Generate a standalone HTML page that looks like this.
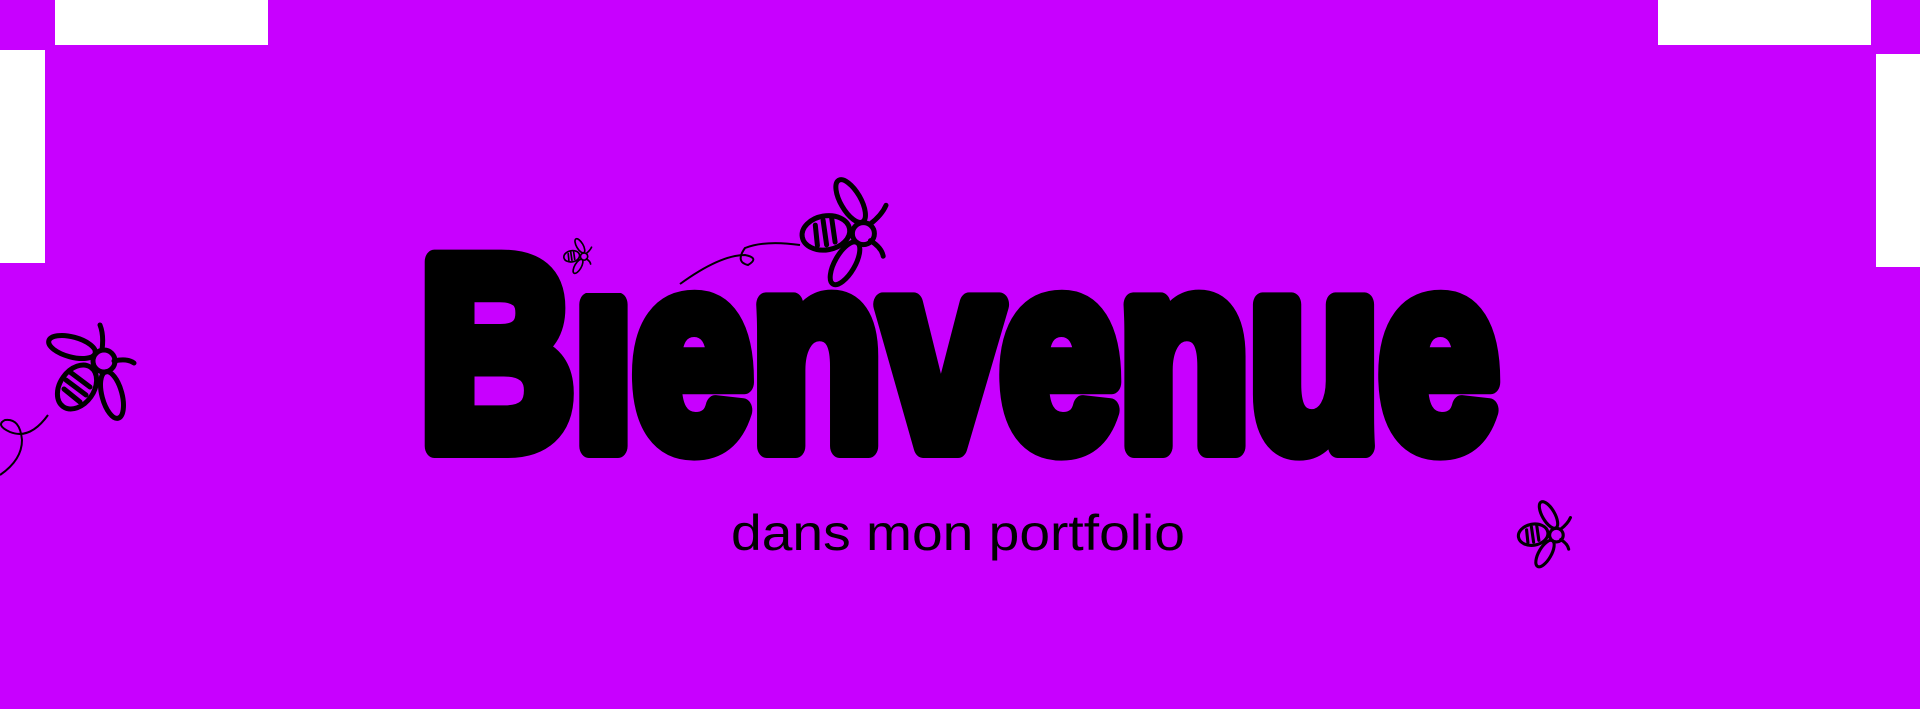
<!DOCTYPE html>
<html><head><meta charset="utf-8"><style>
html,body{margin:0;padding:0;width:1920px;height:709px;overflow:hidden;background:#c800ff}
.w{position:absolute;background:#fff}
svg{position:absolute;left:0;top:0}
</style></head><body>
<div class="w" style="left:55px;top:0;width:213px;height:45px"></div>
<div class="w" style="left:0;top:50px;width:45px;height:213px"></div>
<div class="w" style="left:1658px;top:0;width:213px;height:45px"></div>
<div class="w" style="left:1876px;top:54px;width:44px;height:213px"></div>
<svg width="1920" height="709" viewBox="0 0 1920 709">
<defs>
<g id="bee" fill="none" stroke="#000" stroke-width="5" stroke-linecap="round">
  <ellipse cx="35" cy="62" rx="17" ry="24" transform="rotate(35 35 62)"/>
  <path d="M24 55 L44 70 M28 47 L48 62 M22 64 L38 77"/>
  <circle cx="62" cy="36" r="11"/>
  <ellipse cx="30" cy="22" rx="24" ry="10" transform="rotate(15 30 22)"/>
  <ellipse cx="70" cy="70" rx="10" ry="24" transform="rotate(-15 70 70)"/>
  <path d="M60 25 Q62 10 58 0 M72 36 Q85 33 92 38"/>
</g>
</defs>
<text x="420" y="446" font-family="Liberation Sans, sans-serif" font-weight="bold" font-size="268" textLength="1078" lengthAdjust="spacingAndGlyphs" fill="#000" stroke="#000" stroke-width="24" stroke-linejoin="round">Bienvenue</text>
<rect x="570" y="215" width="70" height="78" fill="#c800ff"/>
<text x="731" y="550" font-family="Liberation Sans, sans-serif" font-size="50" textLength="454" lengthAdjust="spacingAndGlyphs" fill="#000">dans mon portfolio</text>
<use href="#bee" transform="translate(42,325) scale(1.0)"/>
<path d="M48 415 Q30 440 10 432 Q-5 425 5 420 Q20 418 22 440 Q22 460 0 475" fill="none" stroke="#000" stroke-width="2"/>
<use href="#bee" transform="translate(845,235) rotate(45) translate(-50,-50)"/>
<path d="M680 284 Q720 255 745 255 Q760 258 748 265 Q735 262 745 248 Q765 240 800 245" fill="none" stroke="#000" stroke-width="2"/>
<use href="#bee" transform="translate(578,257) rotate(45) scale(0.33) translate(-50,-50)"/>
<use href="#bee" transform="translate(1545,536) rotate(45) scale(0.62) translate(-50,-50)"/>
</svg>
</body></html>
